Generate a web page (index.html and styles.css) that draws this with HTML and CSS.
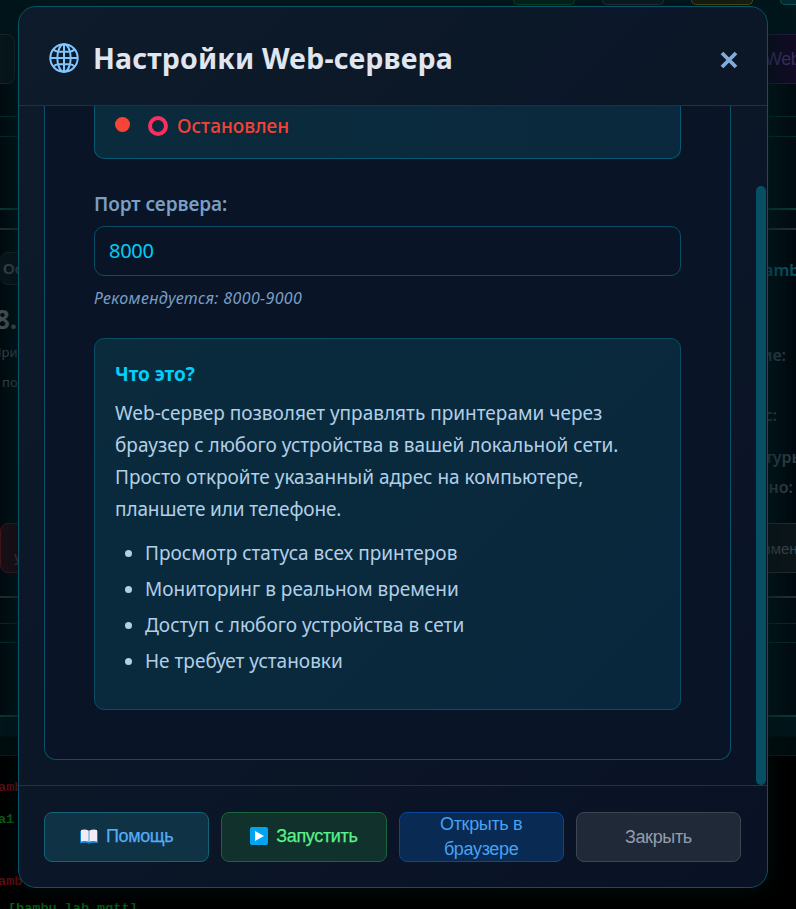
FILE: index.html
```html
<!DOCTYPE html>
<html lang="ru">
<head>
<meta charset="utf-8">
<title>Настройки Web-сервера</title>
<link rel="stylesheet" href="styles.css">
</head>
<body>
<div class="page">
  <div class="pills"><i class="pill green"></i><i class="pill gray"></i><i class="pill yellow"></i><i class="pill teal"></i></div>
  <div class="toolbar"><div class="tool-left"></div><div class="tool-right">Web-</div></div>
  <div class="band"></div>
  <div class="strip"></div>
  <div class="printers">
    <div class="col-left">
      <div class="tab">Осн</div>
      <div class="ip">8.1</div>
      <div class="small">Принтер</div>
      <div class="small second">подкл</div>
      <div class="delete">удалить</div>
    </div>
    <div class="col-right">
      <div class="name">Bamb</div>
      <div class="prop state">Состояние:</div>
      <div class="prop progress">Прогресс:</div>
      <div class="prop temp">Температуры</div>
      <div class="prop updated">Обновлено:</div>
      <div class="edit">Измен</div>
    </div>
  </div>
  <div class="band lower"></div>
  <div class="strip lower-strip"></div>
  <div class="log-head"></div>
  <div class="log">
    <p class="red">bamb</p><p class="lime">a1</p><p class="red last">bamb</p><p class="lime tail">[bambu_lab_mqtt]</p>
  </div>
</div>

<section class="modal">
  <header class="head">
    <svg class="globe" viewBox="0 0 30 30" fill="none" stroke="#80c6ff" stroke-width="2"><circle cx="15" cy="15" r="13.7"/><ellipse cx="15" cy="15" rx="6.7" ry="13.7"/><path d="M15 1v28M1 15h28M4 6.3Q6.5 8.7 9.5 8.7h11Q23.500 8.700 26 6.300M4 23.700Q6.500 21.300 9.500 21.300h11Q23.500 21.300 26 23.700"/></svg>
    <h1>Настройки Web-сервера</h1>
    <svg class="close" viewBox="0 0 18 18" stroke="#82addb" stroke-width="3.800"><path d="M2 2l14 14M16 2L2 16"/></svg>
  </header>
  <div class="body">
    <div class="panel">
      <div class="status"><i class="dot"></i><i class="ring"></i><span>Остановлен</span></div>
      <div class="label">Порт сервера:</div>
      <div class="input">8000</div>
      <div class="hint">Рекомендуется: 8000-9000</div>
      <div class="info">
        <h2>Что это?</h2>
        <p>Web-сервер позволяет управлять принтерами через<br>браузер с любого устройства в вашей локальной сети.<br>Просто откройте указанный адрес на компьютере,<br><span class="tight">планшете или телефоне.</span></p>
        <ul><li>Просмотр статуса всех принтеров</li><li>Мониторинг в реальном времени</li><li>Доступ с любого устройства в сети</li><li>Не требует установки</li></ul>
      </div>
    </div>
    <div class="track"><div class="thumb"></div></div>
  </div>
  <footer class="foot">
    <div class="btn help"><svg width="18" height="15" viewBox="0 0 18 15"><path fill="#0b83cf" d="M0 2h18v12h-7l-2 1-2-1H0z"/><path fill="#f2ecf8" d="M1 1q4-1 7.500.5V12.500Q5 11.500 1 12.500zM17 1q-4-1-7.500.5V12.500q3.500-1 7.500 0z"/><path stroke="#d5ccdf" d="M9 1.500V13"/></svg><span>Помощь</span></div>
    <div class="btn start"><svg width="18" height="18" viewBox="0 0 18 18"><rect width="18" height="18" rx="2" fill="#00a4f0"/><path fill="#fff" d="M5 4l9 5-9 5z"/></svg><span>Запустить</span></div>
    <div class="btn open"><span>Открыть в<br>браузере</span></div>
    <div class="btn shut"><span>Закрыть</span></div>
  </footer>
</section>
</body>
</html>
```
FILE: styles.css
```css
* { box-sizing: border-box; }
body { margin: 0; width: 796px; height: 909px; overflow: hidden; background: #000; font-family: "Noto Sans", sans-serif; }
h1, h2, p, ul { margin: 0; padding: 0; }

.page { height: 909px; overflow: hidden; background: linear-gradient(90deg, #020b10, #03171b 20px, #03171b 765px, #030c12); color: #3a464c; }
.pills { display: flex; gap: 27px; height: 34px; padding-left: 513px; background: #02161b; }
.pill { flex: none; width: 62px; height: 5px; border: 1px solid; border-top: 0; border-radius: 0 0 30px 30px; }
.pill.green { color: #0d4829; background: #052219; }
.pill.gray { color: #2b363b; background: #0b1a20; }
.pill.yellow { color: #5c5113; background: #1b1e0d; }
.pill.teal { color: #10525a; background: #062a31; }
.toolbar { display: flex; justify-content: space-between; height: 50px; }
.tool-left { width: 15px; border: 1px solid #1a262a; border-left: 0; border-radius: 0 8px 8px 0; background: #08171c; }
.tool-right { width: 40px; padding-left: 9px; white-space: nowrap; font: 18px/48px "Liberation Sans", sans-serif; letter-spacing: -.4px; color: #382e60; border: solid #251a40; border-width: 1px 0; background: linear-gradient(90deg, #06111c, #150c27); }
.band { height: 21px; margin-top: 32px; border: solid #032c2f; border-width: 1px 0; }
.strip { height: 73px; border-bottom: 2px solid #073a38; }
.printers { display: flex; justify-content: space-between; height: 370px; margin-top: 18px; border: solid #252d32; border-width: 2px 0; background: linear-gradient(90deg, #020b10, #03161b 20px, #03161b 765px, #020a10); }
.col-left { width: 80px; padding-top: 22px; white-space: nowrap; }
.tab { width: 80px; height: 33px; padding-left: 3px; border: 1px solid #1a262a; border-left: 0; border-radius: 8px; background: #09171c; font: bold 15px/31px "Liberation Sans", sans-serif; }
.ip { margin: 18px 0 0 -5px; font: bold 26px/32px "Open Sans", sans-serif; color: #46545b; }
.small { margin: 7px 0 0 -8px; font-size: 13px; line-height: 20px; }
.small.second { margin: 10px 0 0 2px; }
.delete { height: 50px; margin-top: 131px; padding: 8px 0 0 13px; border: 1px solid #44161d; border-radius: 8px; background: #1b1017; color: #68302f; font: 15px/50px "Liberation Sans", sans-serif; }
.col-right { width: 100px; font-weight: 600; white-space: nowrap; }
.name { margin-top: 28px; padding-left: 57px; font-size: 16.500px; line-height: 24px; color: #075461; }
.prop { color: #2d3e48; font-size: 16px; line-height: 22px; text-align: right; padding-right: 10px; }
.state { margin-top: 62px; }
.progress { margin-top: 38px; padding-right: 19px; }
.temp { margin-top: 20px; padding-right: 0; margin-right: -4px; }
.updated { margin-top: 8px; padding-right: 3px; }
.edit { height: 50px; margin-top: 25px; padding-left: 57px; border: solid #252d32; border-width: 1px 0; background: #0d161a; font: 15px/50px "Liberation Sans", sans-serif; color: #3b464d; }
.lower { margin-top: 25px; height: 20px; }
.lower-strip { height: 74px; }
.log-head { height: 39px; border-bottom: 1px solid #03260b; background: linear-gradient(#03161b 19px, #020d0f 20px); }
.log { height: 153px; background: #000; padding-top: 22px; font: bold 13.500px/20px "Liberation Mono", monospace; }
.log p { margin-left: -10px; height: 32px; }
.log .red { color: #680d11; }
.log .lime { color: #086714; margin-left: -2px; height: 62px; }
.log .last { height: 27px; }
.log .tail { margin-left: 8px; }

.modal { position: absolute; left: 18px; top: 6px; width: 750px; height: 882px; display: flex; flex-direction: column; overflow: hidden; border: 1px solid #075368; border-radius: 18px; background: linear-gradient(135deg, #0d1b2a, #091225); box-shadow: 0 0 24px #02272b60, 0 10px 30px #00000070; }
.head { flex: none; display: flex; align-items: center; height: 99px; padding: 0 29px 0 30px; border-bottom: 1px solid #0b3a4d; }
.globe { width: 30px; height: 30px; margin-top: 3px; }
.head h1 { flex: 1; margin: 3px 0 0 14px; font: bold 28.500px/40px "Noto Sans", sans-serif; letter-spacing: .15px; color: #e0e6ef; white-space: nowrap; }
.close { width: 18px; height: 18px; margin-top: 7px; }
.body { display: flex; justify-content: space-between; height: 679px; }
.panel { width: 687px; height: 654px; margin-left: 25px; padding: 0 49px; border: 1px solid #085168; border-top: 0; border-radius: 0 0 12px 12px; background: #0a1427; }
.status { display: flex; height: 53px; padding-left: 20px; border: 1px solid #075870; border-top: 0; border-radius: 0 0 10px 10px; background: linear-gradient(90deg, #0a2b3c, #0a293e); color: #f44336; }
.dot { width: 15px; height: 15px; margin-top: 11px; border-radius: 50%; background: #f84437; }
.ring { width: 20px; height: 20px; margin: 10px 9px 0 18px; border: 4px solid #f82f60; border-radius: 50%; }
.status span { font: 500 19px/40px "Noto Sans", sans-serif; }
.label { height: 30px; margin-top: 30px; font: 600 19px/30px "Noto Sans", sans-serif; letter-spacing: -.08px; color: #789fc4; }
.input { height: 50px; margin-top: 7px; padding-left: 14px; border: 1px solid #084f65; border-radius: 10px; font: 20px/47px "Noto Sans", sans-serif; letter-spacing: -.3px; color: #00cdf5; }
.hint { height: 24px; margin-top: 10px; font: italic 16px/24px "Noto Sans", sans-serif; letter-spacing: .37px; color: #789fc4; }
.info { height: 372px; margin-top: 28px; padding: 21px 20px; border: 1px solid #084f65; border-radius: 10px; background: linear-gradient(135deg, #0a2b3c, #09273c); color: #b2cfe7; font: 19px/32px "Noto Sans", sans-serif; }
.info h2 { height: 29px; font: bold 19px/29px "Noto Sans", sans-serif; color: #00d0fb; }
.info p { height: 128px; margin-top: 8px; white-space: nowrap; }
.tight { letter-spacing: -.13px; }
.info ul { margin-top: 10px; padding-left: 30px; line-height: 36px; }
.track { width: 11px; padding-top: 80px; }
.thumb { width: 10px; height: 599px; border-radius: 5px; background: #075064; }
.foot { display: flex; gap: 12px; height: 102px; padding: 26px 26px 0 25px; border-top: 1px solid #0a3b4e; }
.btn { flex: 1 1 0; min-width: 0; height: 50px; display: flex; align-items: center; justify-content: center; gap: 8px; border: 1px solid; border-radius: 8px; font: 18px/25px "Liberation Sans", sans-serif; letter-spacing: -.35px; text-align: center; }
.help { background: #0f3345; border-color: #146378; color: #54acf6; }
.start { background: #11312d; border-color: #19663b; color: #59f288; }
.open { background: #092a52; border-color: #07489a; color: #48a1f3; }
.shut { background: #1f2937; border-color: #3d4653; color: #939dac; }
.help, .start { padding-bottom: 2px; }
.help span, .start span { -webkit-text-stroke: .25px currentColor; }
```
